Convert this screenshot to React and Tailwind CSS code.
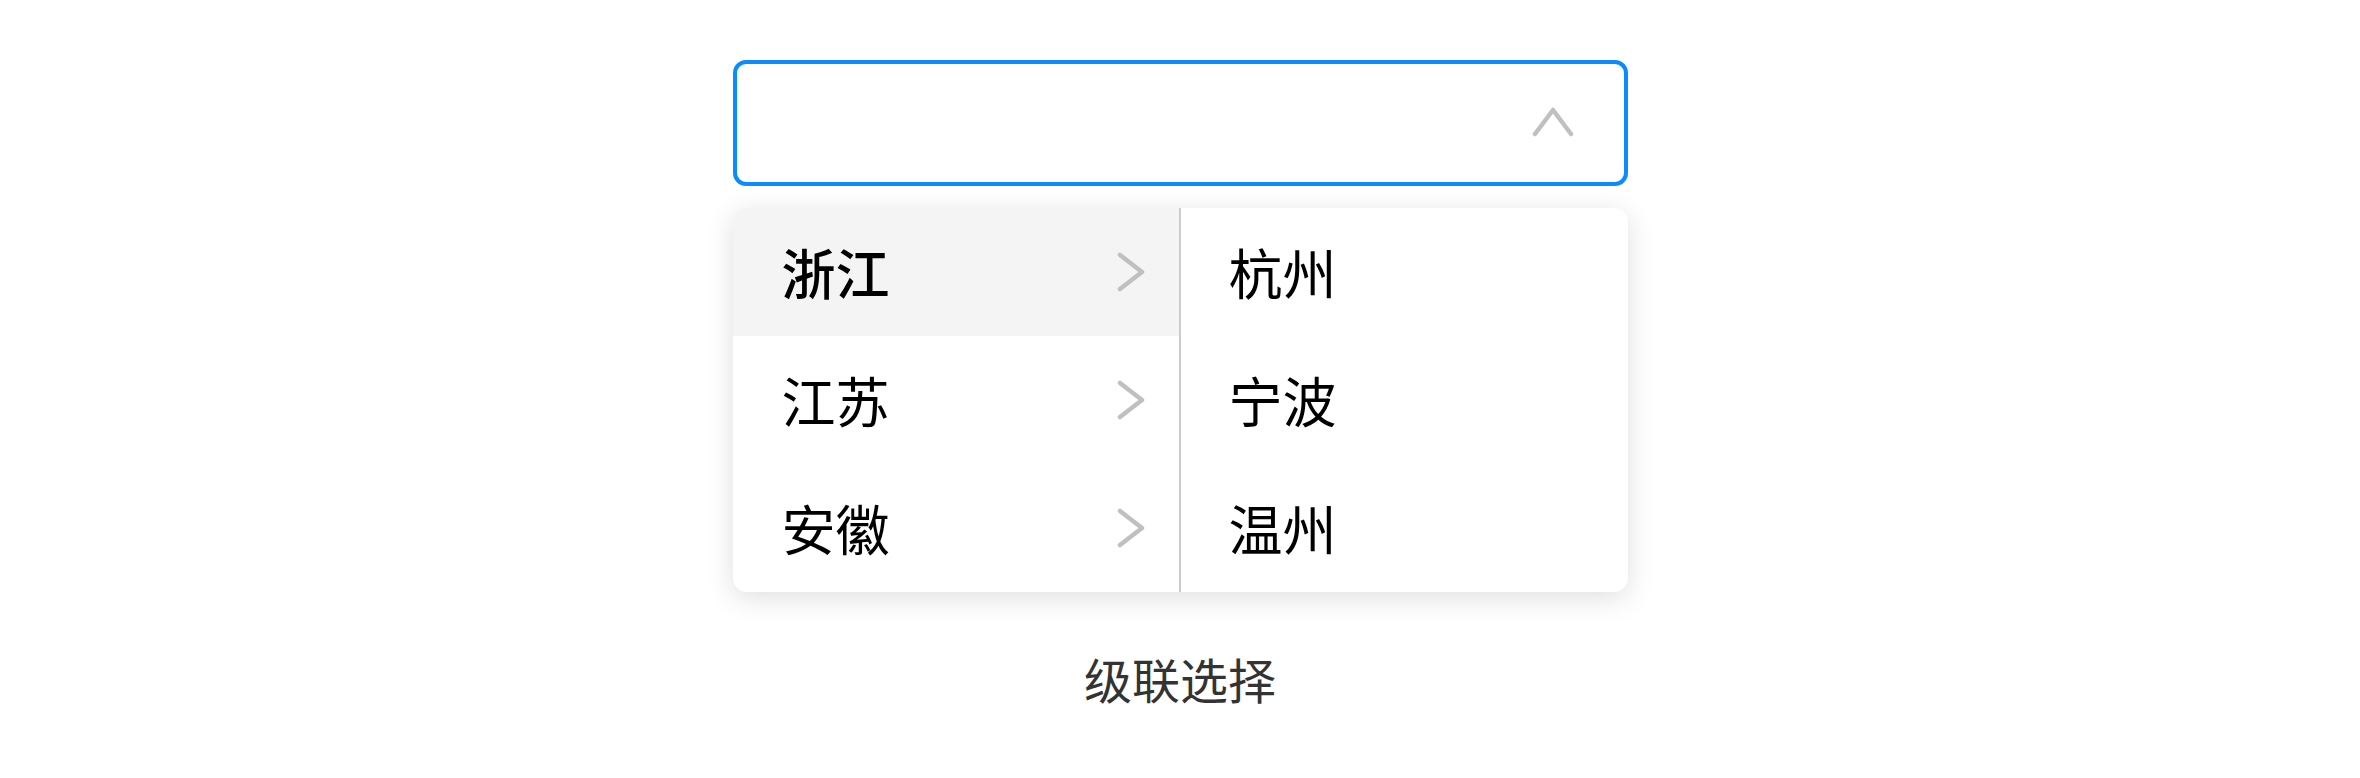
const provinces = [
	{ name: "浙江", active: true },
	{ name: "江苏", active: false },
	{ name: "安徽", active: false },
];

const cities = ["杭州", "宁波", "温州"];

const ChevronRight = () => (
	<svg width="28" height="40" viewBox="0 0 28 40" fill="none">
		<path
			d="M3 3 L25 20 L3 37"
			stroke="#c0c0c0"
			strokeWidth="4.5"
			strokeLinecap="round"
			strokeLinejoin="round"
		/>
	</svg>
);

const ChevronUp = () => (
	<svg width="42" height="30" viewBox="0 0 42 30" fill="none">
		<path
			d="M3 27 L21 3 L39 27"
			stroke="#c0c0c0"
			strokeWidth="4.5"
			strokeLinecap="round"
			strokeLinejoin="round"
		/>
	</svg>
);

const App = () => {
	return (
		<div
			className="w-full min-h-screen bg-white flex flex-col items-center pt-[60px]"
			style={{ fontFamily: '"Noto Sans CJK SC", "Noto Sans", sans-serif' }}
		>
			<div className="w-[895px]">
				<div className="h-[126px] border-4 border-[#0a8bff] rounded-[13px] flex items-center justify-end pr-[50px] pb-[2px]">
					<ChevronUp />
				</div>

				<div className="mt-[22px] bg-white rounded-[14px] overflow-hidden flex shadow-[0_6px_28px_rgba(0,0,0,0.13)]">
					<div className="w-[448px] border-r-2 border-[#cbcbcb]">
						{provinces.map((item) => (
							<div
								key={item.name}
								className={
									item.active
										? "h-[128px] flex items-center justify-between pl-[49px] pr-[34px] bg-[#f4f4f4]"
										: "h-[128px] flex items-center justify-between pl-[49px] pr-[34px]"
								}
							>
								<span
									className={
										item.active
											? "text-[54px] leading-none text-black font-medium"
											: "text-[54px] leading-none text-black"
									}
								>
									{item.name}
								</span>
								<ChevronRight />
							</div>
						))}
					</div>
					<div className="flex-1">
						{cities.map((city) => (
							<div key={city} className="h-[128px] flex items-center pl-[48px]">
								<span className="text-[54px] leading-none text-black">{city}</span>
							</div>
						))}
					</div>
				</div>
			</div>

			<div className="mt-[62px] text-[48px] leading-none text-[#333333]">级联选择</div>
		</div>
	);
};

export default App;
